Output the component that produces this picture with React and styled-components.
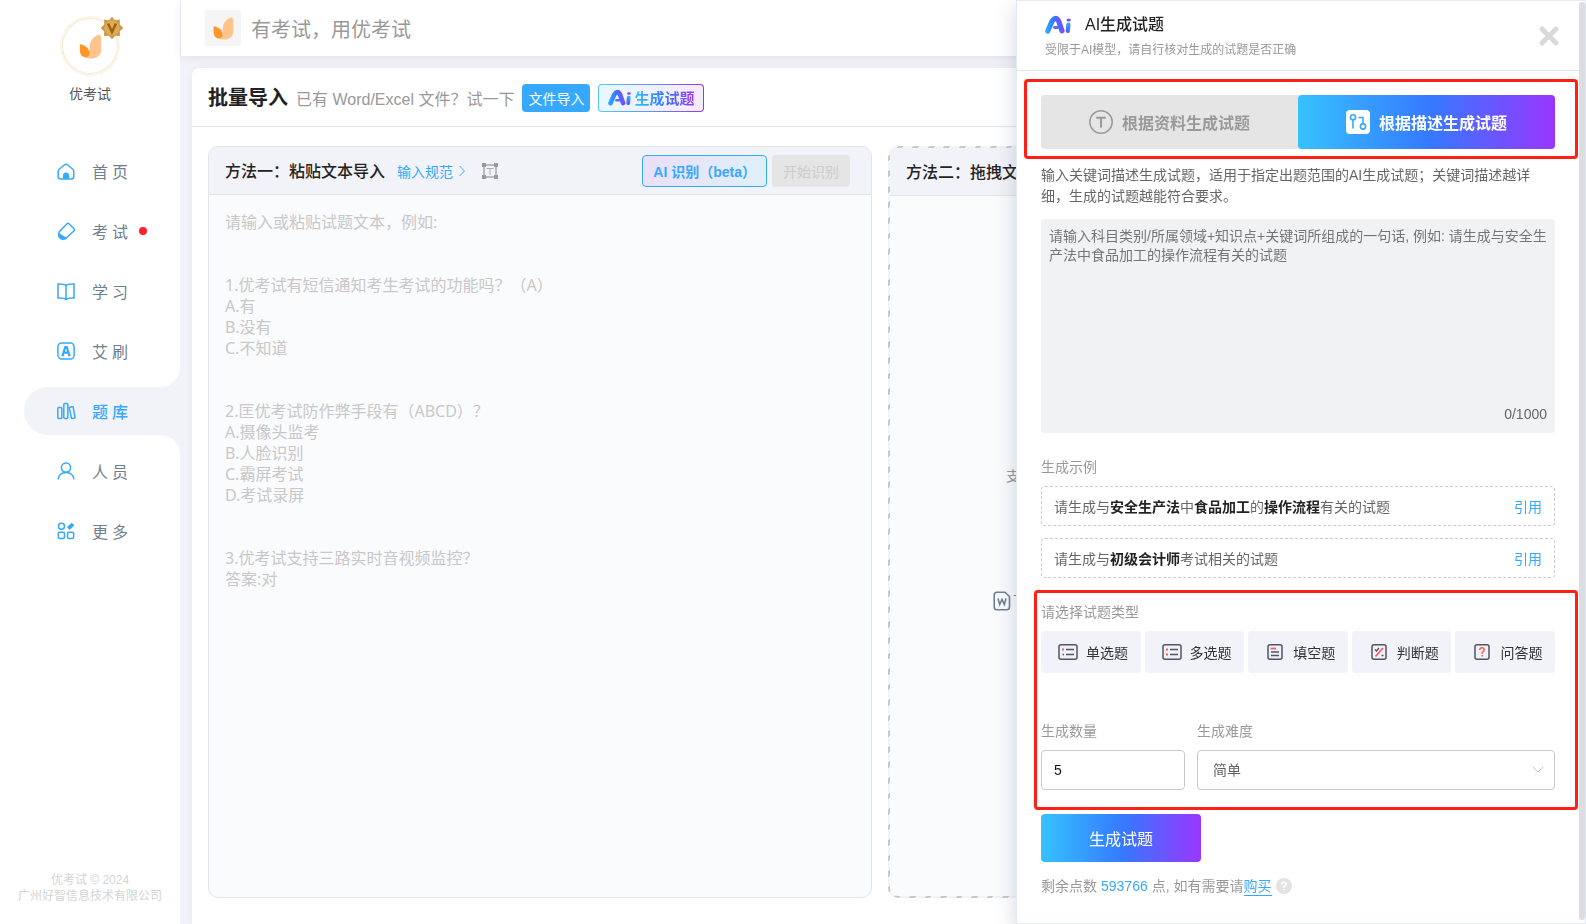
import React, { useState } from 'react'
import styled, { createGlobalStyle, css } from 'styled-components'

const BLUE = '#36a9ff'
const PAGE_BG = '#f2f3f8'
const GRADIENT = 'linear-gradient(90deg, #36c2ff 0%, #3678ff 52%, #9a36ff 100%)'
const SANS = "'Liberation Sans', Arial, 'Noto Sans CJK SC', sans-serif"
const HUMANIST = "'Noto Sans', 'Noto Sans CJK SC', sans-serif"

const GlobalStyle = createGlobalStyle`
  * {
    box-sizing: border-box;
  }
  body {
    margin: 0;
    font-family: ${SANS};
    font-size: 14px;
    color: #333;
    background: ${PAGE_BG};
  }
  button, input, select, textarea {
    margin: 0;
    font-family: inherit;
  }
  button {
    padding: 0;
    border: 0;
    background: none;
    cursor: pointer;
  }
  h1, h2, p {
    margin: 0;
  }
  a {
    text-decoration: none;
  }
  svg {
    display: block;
    flex: none;
  }
`

const Page = styled.div`
  display: flex;
  height: 100vh;
  overflow: hidden;
`

/* sidebar */

const Sidebar = styled.aside`
  flex: none;
  display: flex;
  flex-direction: column;
  width: 180px;
  background: #fff;
`

const Account = styled.div`
  display: flex;
  flex-direction: column;
  align-items: center;
  gap: 8px;
  height: 147px;
  padding-top: 16px;
  line-height: 20px;
  color: #555;
`

const Avatar = styled.div`
  position: relative;
  display: flex;
  align-items: center;
  justify-content: center;
  width: 60px;
  height: 60px;
  border: 2px solid #fbf5ea;
  border-radius: 50%;
  box-shadow: inset 0 0 0 1px #f5e6cc;
`

const VipBadge = styled.span`
  position: absolute;
  top: -2px;
  right: -6px;
`

const Menu = styled.nav`
  display: flex;
  flex-direction: column;
  gap: 12px;
`

const MenuItem = styled.a`
  position: relative;
  display: flex;
  align-items: center;
  gap: 15px;
  height: 48px;
  margin-left: 24px;
  padding-left: 33px;
  border-radius: 24px 0 0 24px;
  font-size: 16px;
  letter-spacing: 4px;
  color: #6f7f8f;

  ${props =>
    props.$active &&
    css`
      background: ${PAGE_BG};
      color: ${BLUE};
      font-weight: 500;

      &::before,
      &::after {
        content: '';
        position: absolute;
        right: 0;
        width: 20px;
        height: 20px;
      }
      &::before {
        bottom: 100%;
        border-bottom-right-radius: 20px;
        box-shadow: 6px 6px 0 6px ${PAGE_BG};
        clip-path: inset(0);
      }
      &::after {
        top: 100%;
        border-top-right-radius: 20px;
        box-shadow: 6px -6px 0 6px ${PAGE_BG};
        clip-path: inset(0);
      }
    `}
`

const Dot = styled.i`
  width: 8px;
  height: 8px;
  margin-left: -8px;
  border-radius: 50%;
  background: #ff1f2d;
`

const Copyright = styled.footer`
  margin-top: auto;
  padding-bottom: 20px;
  text-align: center;
  font-size: 12px;
  line-height: 16px;
  color: #d4d4d4;
`

/* main area */

const Main = styled.main`
  flex: 1;
  display: flex;
  flex-direction: column;
  min-width: 0;
`

const TopBar = styled.header`
  flex: none;
  display: flex;
  align-items: center;
  gap: 10px;
  height: 56px;
  padding-left: 24px;
  border-left: 1px solid #e9ebf2;
  background: #fff;
  box-shadow: 0 2px 8px rgba(40, 50, 90, 0.08);
  font-size: 20px;
  color: #999;
`

const LogoTile = styled.div`
  display: flex;
  align-items: center;
  justify-content: center;
  width: 36px;
  height: 36px;
  background: #f5f5f5;
`

const Card = styled.section`
  flex: 1;
  display: flex;
  flex-direction: column;
  margin: 12px 18px 0 12px;
  border-radius: 8px 8px 0 0;
  background: #fff;
  box-shadow: 0 0 8px rgba(40, 50, 90, 0.06);
`

const CardHeader = styled.div`
  display: flex;
  align-items: center;
  gap: 8px;
  height: 59px;
  padding: 1px 16px 0;
  border-bottom: 1px solid #e5e5e5;
`

const CardTitle = styled.h1`
  font-size: 20px;
  line-height: 28px;
  color: #222;
`

const Hint = styled.span`
  font-size: 16px;
  color: #999;
`

const ImportButton = styled.button`
  height: 28px;
  padding: 0 6px;
  border-radius: 4px;
  background: ${BLUE};
  font-size: 14px;
  color: #fff;
`

const AiButton = styled.button`
  display: flex;
  align-items: center;
  gap: 3px;
  height: 28px;
  padding: 0 9px;
  border: 1px solid transparent;
  border-radius: 4px;
  background: linear-gradient(90deg, #e9f8ff, #eef1ff 50%, #f6ebff) padding-box,
    linear-gradient(90deg, #54c8ff, #6a8dff 50%, #9a36d8) border-box;
  font-size: 15px;
  font-weight: 700;

  span {
    background: ${GRADIENT};
    background-clip: text;
    color: transparent;
  }
`

const Panels = styled.div`
  flex: 1;
  display: grid;
  grid-template-columns: 1fr 1fr;
  gap: 16px;
  min-height: 0;
  padding: 19px 16px 26px;
`

const Panel = styled.section`
  display: flex;
  flex-direction: column;
  min-width: 0;
  border: 1px solid #e2e4e8;
  border-radius: 10px;
  background: #fafbfd;
  overflow: hidden;
`

const DropPanel = styled(Panel)`
  border: 2px solid transparent;
  background: linear-gradient(#fafbfd, #fafbfd) padding-box,
    repeating-linear-gradient(-45deg, #c8c8c8 0 4px, #f3f3f3 4px 11px) border-box;
`

const PanelHeader = styled.div`
  flex: none;
  display: flex;
  align-items: center;
  height: 48px;
  padding: 0 21px 0 16px;
  border-bottom: 1px solid #e2e4e8;
  background: ${PAGE_BG};
`

const PanelTitle = styled.h2`
  padding-bottom: 2px;
  font-size: 16px;
  font-weight: 500;
  color: #222;
  white-space: nowrap;
`

const RuleLink = styled.a`
  display: flex;
  align-items: center;
  gap: 5px;
  margin: 0 16px 0 12px;
  color: ${BLUE};
`

const PanelActions = styled.div`
  display: flex;
  gap: 5px;
  margin-left: auto;
`

const BetaButton = styled.button`
  height: 32px;
  padding: 0 10px;
  border: 1px solid ${BLUE};
  border-radius: 4px;
  background: linear-gradient(90deg, #eadff8, #dff0f9);
  font-size: 14px;
  font-weight: 700;
  color: ${BLUE};
`

const StartButton = styled.button`
  height: 32px;
  padding: 0 11px;
  border-radius: 4px;
  background: #e5e5e5;
  font-size: 14px;
  color: #ccc;
`

const PasteArea = styled.textarea`
  flex: 1;
  width: 100%;
  padding: 17px 16px;
  border: 0;
  outline: 0;
  resize: none;
  background: transparent;
  font-family: ${HUMANIST};
  font-size: 16px;
  line-height: 21px;

  &::placeholder {
    color: #c8c8c8;
    opacity: 1;
  }
`

const DropBody = styled.div`
  flex: 1;
  display: flex;
  flex-direction: column;
  justify-content: center;
  gap: 105px;
  padding: 0 0 15px 103px;
  color: #999;
`

const DropTip = styled.p`
  padding-left: 13px;
  line-height: 20px;
`

const TemplateLink = styled.a`
  display: flex;
  align-items: center;
  gap: 2px;
  line-height: 20px;
  color: #708090;
`

/* drawer */

const Drawer = styled.aside`
  position: fixed;
  top: 0;
  right: 0;
  bottom: 0;
  width: 570px;
  border: 1px solid #e4e9ef;
  background: #fff;
  box-shadow: 0 8px 20px rgba(60, 80, 120, 0.24);
`

const ScrollThumb = styled.div`
  position: absolute;
  top: 1px;
  right: 0;
  bottom: 3px;
  width: 6px;
  border-radius: 3px;
  background: #dcdde0;
`

const DrawerHeader = styled.header`
  display: flex;
  align-items: center;
  justify-content: space-between;
  height: 70px;
  margin-right: 6px;
  padding: 0 19px 0 28px;
  border-bottom: 1px solid #e5e5e5;
`

const DrawerTitle = styled.h2`
  display: flex;
  align-items: center;
  gap: 14px;
  font-size: 16px;
  line-height: 24px;
  font-weight: 500;
  color: #222;
`

const DrawerSub = styled.p`
  margin-top: 4px;
  font-size: 12px;
  line-height: 18px;
  color: #999;
`

const DrawerBody = styled.div`
  padding: 24px 30px 0 24px;
`

const highlight = css`
  content: '';
  position: absolute;
  border: 3px solid #ff2015;
  border-radius: 4px;
  pointer-events: none;
`

const Tabs = styled.div`
  position: relative;
  display: grid;
  grid-template-columns: 1fr 1fr;
  border-radius: 4px;
  background: #e5e5e5;

  &::after {
    ${highlight}
    inset: -16px -23px -10px -17px;
  }
`

const Tab = styled.button`
  display: flex;
  align-items: center;
  justify-content: center;
  gap: 9px;
  height: 54px;
  border-radius: 4px;
  background: ${props => (props.$active ? GRADIENT : 'none')};
  font-size: 16px;
  font-weight: 700;
  color: ${props => (props.$active ? '#fff' : '#999')};
`

const Intro = styled.p`
  margin: 16px 0 12px;
  line-height: 21px;
  color: #666;
`

const PromptBox = styled.div`
  position: relative;
  height: 214px;
  border-radius: 4px;
  background: #f0f2f4;

  textarea {
    display: block;
    width: 100%;
    height: 100%;
    padding: 8px 6px 8px 8px;
    border: 0;
    outline: 0;
    resize: none;
    background: transparent;
    font-size: 14px;
    line-height: 19px;
  }
  textarea::placeholder {
    color: #757575;
    opacity: 1;
  }
  span {
    position: absolute;
    right: 8px;
    bottom: 9px;
    line-height: 20px;
    color: #666;
  }
`

const Label = styled.label`
  display: block;
  margin: 24px 0 9px;
  line-height: 20px;
  color: #999;
`

const Example = styled.div`
  display: flex;
  align-items: center;
  justify-content: space-between;
  height: 40px;
  padding: 0 12px;
  border: 1px dashed #ccc;
  border-radius: 4px;
  color: #666;

  & + & {
    margin-top: 12px;
  }
  b {
    color: #222;
  }
  button {
    font-size: 14px;
    color: ${BLUE};
  }
`

const Settings = styled.section`
  position: relative;
  margin-top: 24px;

  & > ${Label} {
    margin-top: 0;
  }
  &::after {
    ${highlight}
    inset: -12px -23px -20px -7px;
  }
`

const TypeList = styled.div`
  display: grid;
  grid-template-columns: repeat(5, 1fr);
  gap: 4px;
  margin-bottom: 48px;
`

const TypeButton = styled.button`
  display: flex;
  align-items: center;
  gap: 8px;
  height: 42px;
  padding-left: 17px;
  border-radius: 4px;
  background: ${PAGE_BG};
  font-size: 14px;
  color: #333;
`

const Fields = styled.div`
  display: grid;
  grid-template-columns: 144px 1fr;
  gap: 12px;

  ${Label} {
    margin-top: 0;
  }
`

const control = css`
  display: block;
  width: 100%;
  height: 40px;
  border: 1px solid #c8c9cc;
  border-radius: 4px;
  outline: 0;
  background: #fff;
  font-size: 14px;
`

const CountInput = styled.input`
  ${control}
  padding: 0 12px;
  color: #111;
`

const SelectWrap = styled.div`
  position: relative;

  select {
    ${control}
    padding: 0 15px;
    appearance: none;
    color: #606266;
  }
  svg {
    position: absolute;
    top: 16px;
    right: 11px;
    pointer-events: none;
  }
`

const SubmitButton = styled.button`
  display: block;
  width: 160px;
  height: 48px;
  margin-top: 24px;
  border-radius: 4px;
  background: ${GRADIENT};
  font-size: 16px;
  color: #fff;
`

const Balance = styled.p`
  display: flex;
  align-items: center;
  margin-top: 14px;
  line-height: 20px;
  color: #999;

  em {
    margin: 0 4px;
    font-style: normal;
    color: ${BLUE};
  }
  a {
    margin-right: 4px;
    border-bottom: 1px solid ${BLUE};
    line-height: 18px;
    color: ${BLUE};
  }
`

/* icons */

const Leaf = ({ size }) => (
  <svg width={size} height={size} viewBox='0 0 24 28'>
    <path d='M11.5 16C12 8 16 2.500 23 1.500C23.500 2.500 24 5 24 9V18C24 24 19 27.500 13 27.500C8 27.500 4.500 26 3 23C9 26 12.500 22 11.500 16Z' fill='#ffc48c' />
    <path d='M1 12C7 12.500 11.500 17 11.500 21.500C11.500 24.500 9.500 26 7 26C3 26 1 22.500 1 18Z' fill='#ff9628' />
  </svg>
)

const BadgeIcon = () => (
  <svg width='24' height='24' viewBox='0 0 24 24'>
    <path
      d='M12 .8L15 4.200L19.800 3.600L19.800 8.600L23.400 12L19.800 15.200L20 20L15.200 19.800L12 23.200L8.800 19.800L4 20L4.200 15.200L.6 12L4.200 8.600L4.200 3.600L9 4.200Z'
      fill='#cf9a45'
    />
    <circle cx='12' cy='12' r='7.500' fill='#dbac5c' />
    <path d='M8 7.500L12 16L16 7.500' fill='none' stroke='#a0640c' strokeWidth='2.600' />
  </svg>
)

const AiLogo = ({ width = 26 }) => (
  <svg width={width} height='19' viewBox='0 0 26 19'>
    <defs>
      <linearGradient id='ai-mark' gradientUnits='userSpaceOnUse' x1='1' y1='14' x2='20' y2='10'>
        <stop offset='0' stopColor='#2fa8ff' />
        <stop offset='.5' stopColor='#3678ff' />
        <stop offset='1' stopColor='#8f3cff' />
      </linearGradient>
      <linearGradient id='ai-stem' gradientUnits='userSpaceOnUse' x1='24' y1='3' x2='22' y2='18'>
        <stop offset='0' stopColor='#8f3cff' />
        <stop offset='.35' stopColor='#35a5ff' />
        <stop offset='1' stopColor='#4a5cff' />
      </linearGradient>
    </defs>
    <path d='M2.800 16L7 6.300Q10.600 .8 13.600 6L17 15.800' fill='none' stroke='url(#ai-mark)' strokeWidth='5.200' strokeLinecap='round' strokeLinejoin='round' />
    <path d='M9.500 12.500H13' stroke='#5a6cff' strokeWidth='2.800' strokeLinecap='round' />
    <path d='M23.400 9.500L22.800 16' stroke='url(#ai-stem)' strokeWidth='4.200' strokeLinecap='round' />
    <ellipse cx='23.700' cy='5' rx='2.200' ry='1.500' fill='#6a55ff' />
  </svg>
)

const menuShapes = {
  home: (
    <>
      <path d='M2 7.500L7.500 2.800Q9 1.700 10.500 2.800L16 7.500Q16.800 8.200 16.800 9.200V14.500Q16.800 17 14.300 17H3.700Q1.200 17 1.200 14.500V9.200Q1.200 8.200 2 7.500Z' />
      <path d='M6 17V13.500Q6 10.500 9 10.500T12 13.500V17Z' fill={BLUE} stroke='none' />
    </>
  ),
  exam: (
    <>
      <path d='M10 1.800Q11 .8 12 1.800L17 6.800Q18 7.800 17 8.800L9.500 16Q5 18.500 2.500 15.500Q.8 13 2.300 9.800Z' />
      <path d='M1.600 10.500Q4 13 9.500 15.500Q5 18.800 2.500 16Q.8 13.800 1.600 10.500Z' fill={BLUE} stroke='none' />
    </>
  ),
  study: <path d='M9 3.500Q7.500 1.800 1 2V16Q7.500 15.800 9 17.500Q10.500 15.800 17 16V2Q10.500 1.800 9 3.500ZM9 3.500V17' />,
  practice: (
    <>
      <rect x='.9' y='.9' width='16.200' height='16.200' rx='4' />
      <path d='M5.500 13.500L8.300 5H9.700L12.500 13.500M6.800 10.700H11.200' strokeWidth='2.200' />
      <path d='M4.500 13.600H7.200M10.800 13.600H13.500' strokeWidth='1.400' />
    </>
  ),
  bank: (
    <>
      <rect x='.8' y='5.500' width='4' height='11' rx='1' />
      <rect x='6.800' y='1.500' width='4' height='15' rx='1' />
      <path d='M12.700 5.200L15.300 4.700Q16 4.600 16.200 5.300L18 15.200Q18.100 15.900 17.400 16L15.200 16.400Q14.500 16.500 14.400 15.800L12.300 6Q12.100 5.300 12.700 5.200Z' />
    </>
  ),
  people: (
    <>
      <circle cx='9' cy='5.600' r='4.600' />
      <path d='M1 17.500Q2 10.500 9 10.500T17 17.500' />
    </>
  ),
  more: (
    <>
      <circle cx='4.500' cy='4.300' r='3' />
      <path d='M11.300 6.700L16 2' strokeWidth='3.800' />
      <rect x='1.300' y='10.300' width='6.200' height='6.200' rx='1.500' />
      <rect x='10.500' y='10.300' width='6.200' height='6.200' rx='1.500' />
    </>
  ),
}

const MenuIcon = ({ name }) => (
  <svg width='20' height='18' viewBox='0 0 20 18' fill='none' stroke={BLUE} strokeWidth='1.500'>
    {menuShapes[name]}
  </svg>
)

const typeShapes = {
  choice: (
    <>
      <rect x='1' y='1.700' width='18' height='14.600' rx='2' />
      <path d='M8 6.500H16M8 11.500H16M4.500 11.500H6' />
      <path d='M4 6.500H6' stroke='#ff5a5a' strokeWidth='2' />
    </>
  ),
  multi: (
    <>
      <rect x='1' y='1.700' width='18' height='14.600' rx='2' />
      <path d='M8 6.500H16M8 11.500H16' />
      <path d='M4 6.500H6M4 11.500H6' stroke='#ff5a5a' strokeWidth='2' />
    </>
  ),
  blank: (
    <>
      <rect x='3' y='1.700' width='14' height='14.600' rx='2' />
      <path d='M6 9H14M6 12.500H14' />
      <path d='M5.500 5.500H11' stroke='#ff5a5a' strokeWidth='1.800' />
    </>
  ),
  judge: (
    <>
      <rect x='3' y='1.700' width='14' height='14.600' rx='2' />
      <path d='M6 6.500L7.500 8L10 5M12.500 12.500H14.500' strokeWidth='1.400' />
      <path d='M6.500 13.500L14 5' stroke='#ff5a5a' strokeWidth='1.800' />
    </>
  ),
  qa: (
    <>
      <rect x='3' y='1.700' width='14' height='14.600' rx='2' />
      <path d='M7.800 7Q7.800 4.800 10 4.800T12.200 7Q12.200 8.300 10.300 9.200V10.800M10.300 12V13.500' stroke='#ff5a5a' />
    </>
  ),
}

const TypeIcon = ({ name }) => (
  <svg width='20' height='18' viewBox='0 0 20 18' fill='none' stroke='#4e5564' strokeWidth='1.500'>
    {typeShapes[name]}
  </svg>
)

const ScanIcon = () => (
  <svg width='16' height='16' viewBox='0 0 16 16' fill='none' stroke='#bbb'>
    <rect x='2' y='2' width='12' height='12' strokeWidth='2' />
    <path d='M4.500 5.500H11.500M8 5.500V12' stroke='#aaa' />
    <path d='M0 0h4v4H0zM12 0h4v4h-4zM0 12h4v4H0zM12 12h4v4h-4z' fill='#999' stroke='none' />
  </svg>
)

const TextIcon = () => (
  <svg width='24' height='24' viewBox='0 0 24 24' fill='none' stroke='#999'>
    <circle cx='12' cy='12' r='11.200' strokeWidth='1.500' />
    <path d='M7.200 7.800H16.800M12 7.800V17.500' strokeWidth='2' />
  </svg>
)

const DescribeIcon = () => (
  <svg width='24' height='24' viewBox='0 0 24 24' fill='none' stroke='#36a9ff' strokeWidth='1.600'>
    <rect width='24' height='24' rx='4' fill='#fff' stroke='none' />
    <circle cx='7' cy='7.300' r='2.600' />
    <path d='M7 10V18.500M12.500 7.500H17V13.500' />
    <circle cx='17' cy='16.500' r='2.600' />
  </svg>
)

const WordIcon = () => (
  <svg width='18' height='20' viewBox='0 0 18 20' fill='none' stroke='#708090' strokeWidth='1.600'>
    <path d='M4 1.200H12L16.500 5.500V16Q16.500 18.800 13.500 18.800H4Q1.200 18.800 1.200 16V4Q1.200 1.200 4 1.200Z' />
    <path d='M5 7.500L6.700 13.500L9 8.500L11.300 13.500L13 7.500' />
  </svg>
)

const HelpIcon = () => (
  <svg width='16' height='16' viewBox='0 0 16 16' fill='none'>
    <circle cx='8' cy='8' r='8' fill='#e3e3e3' />
    <path d='M5.800 6.500Q5.800 4.300 8 4.300T10.200 6.300Q10.200 7.500 8 8.500V9.700M8 11V12.500' stroke='#fff' strokeWidth='1.600' />
  </svg>
)

/* data */

const MENU = [
  { icon: 'home', text: '首页' },
  { icon: 'exam', text: '考试', dot: true },
  { icon: 'study', text: '学习' },
  { icon: 'practice', text: '艾刷' },
  { icon: 'bank', text: '题库', active: true },
  { icon: 'people', text: '人员' },
  { icon: 'more', text: '更多' },
]

const TYPES = [
  { icon: 'choice', text: '单选题' },
  { icon: 'multi', text: '多选题' },
  { icon: 'blank', text: '填空题' },
  { icon: 'judge', text: '判断题' },
  { icon: 'qa', text: '问答题' },
]

const PASTE_SAMPLE = `请输入或粘贴试题文本，例如:


1.优考试有短信通知考生考试的功能吗？（A）
A.有
B.没有
C.不知道


2.匡优考试防作弊手段有（ABCD）？
A.摄像头监考
B.人脸识别
C.霸屏考试
D.考试录屏


3.优考试支持三路实时音视频监控？
答案:对`

function SideNav() {
  return (
    <Sidebar>
      <Account>
        <Avatar>
          <Leaf size={26} />
          <VipBadge>
            <BadgeIcon />
          </VipBadge>
        </Avatar>
        优考试
      </Account>
      <Menu>
        {MENU.map(item => (
          <MenuItem key={item.icon} href='#' $active={item.active}>
            <MenuIcon name={item.icon} />
            {item.text}
            {item.dot ? <Dot /> : null}
          </MenuItem>
        ))}
      </Menu>
      <Copyright>
        优考试 © 2024
        <br />
        广州好智信息技术有限公司
      </Copyright>
    </Sidebar>
  )
}

function ImportCard() {
  return (
    <Card>
      <CardHeader>
        <CardTitle>批量导入</CardTitle>
        <Hint>已有 Word/Excel 文件？试一下</Hint>
        <ImportButton>文件导入</ImportButton>
        <AiButton>
          <AiLogo width={23} />
          <span>生成试题</span>
        </AiButton>
      </CardHeader>
      <Panels>
        <Panel>
          <PanelHeader>
            <PanelTitle>方法一：粘贴文本导入</PanelTitle>
            <RuleLink href='#'>
              输入规范
              <svg width='8' height='12' viewBox='0 0 8 12' fill='none' stroke={BLUE}>
                <path d='M1.500 1L6.500 6L1.500 11' />
              </svg>
            </RuleLink>
            <ScanIcon />
            <PanelActions>
              <BetaButton>AI 识别（beta）</BetaButton>
              <StartButton disabled>开始识别</StartButton>
            </PanelActions>
          </PanelHeader>
          <PasteArea aria-label='粘贴文本导入' placeholder={PASTE_SAMPLE} />
        </Panel>
        <DropPanel>
          <PanelHeader>
            <PanelTitle>方法二：拖拽文</PanelTitle>
          </PanelHeader>
          <DropBody>
            <DropTip>支</DropTip>
            <TemplateLink href='#'>
              <WordIcon />下
            </TemplateLink>
          </DropBody>
        </DropPanel>
      </Panels>
    </Card>
  )
}

function AiDrawer() {
  const [prompt, setPrompt] = useState('')
  const [tab, setTab] = useState('describe')

  return (
    <Drawer>
      <ScrollThumb />
      <DrawerHeader>
        <div>
          <DrawerTitle>
            <AiLogo />
            AI生成试题
          </DrawerTitle>
          <DrawerSub>受限于AI模型，请自行核对生成的试题是否正确</DrawerSub>
        </div>
        <button aria-label='关闭'>
          <svg width='22' height='22' viewBox='0 0 22 22' stroke='#d9d9d9' strokeWidth='5' strokeLinecap='round'>
            <path d='M4 4L18 18M18 4L4 18' />
          </svg>
        </button>
      </DrawerHeader>
      <DrawerBody>
        <Tabs>
          <Tab $active={tab === 'material'} onClick={() => setTab('material')}>
            <TextIcon />
            根据资料生成试题
          </Tab>
          <Tab $active={tab === 'describe'} onClick={() => setTab('describe')}>
            <DescribeIcon />
            根据描述生成试题
          </Tab>
        </Tabs>
        <Intro>输入关键词描述生成试题，适用于指定出题范围的AI生成试题；关键词描述越详细，生成的试题越能符合要求。</Intro>
        <PromptBox>
          <textarea
            aria-label='关键词描述'
            maxLength={1000}
            value={prompt}
            onChange={e => setPrompt(e.target.value)}
            placeholder='请输入科目类别/所属领域+知识点+关键词所组成的一句话, 例如: 请生成与安全生产法中食品加工的操作流程有关的试题'
          />
          <span>{prompt.length}/1000</span>
        </PromptBox>

        <Label as='p'>生成示例</Label>
        <Example>
          <span>
            请生成与<b>安全生产法</b>中<b>食品加工</b>的<b>操作流程</b>有关的试题
          </span>
          <button>引用</button>
        </Example>
        <Example>
          <span>
            请生成与<b>初级会计师</b>考试相关的试题
          </span>
          <button>引用</button>
        </Example>

        <Settings>
          <Label as='p'>请选择试题类型</Label>
          <TypeList>
            {TYPES.map(type => (
              <TypeButton key={type.icon}>
                <TypeIcon name={type.icon} />
                {type.text}
              </TypeButton>
            ))}
          </TypeList>
          <Fields>
            <div>
              <Label htmlFor='count'>生成数量</Label>
              <CountInput id='count' defaultValue='5' />
            </div>
            <div>
              <Label htmlFor='level'>生成难度</Label>
              <SelectWrap>
                <select id='level'>
                  <option>简单</option>
                </select>
                <svg width='12' height='8' viewBox='0 0 12 8' fill='none' stroke='#c0c4cc'>
                  <path d='M1 1L6 6L11 1' />
                </svg>
              </SelectWrap>
            </div>
          </Fields>
        </Settings>

        <SubmitButton>生成试题</SubmitButton>
        <Balance>
          剩余点数<em>593766</em>点, 如有需要请<a href='#'>购买</a>
          <HelpIcon />
        </Balance>
      </DrawerBody>
    </Drawer>
  )
}

export default function App() {
  return (
    <Page>
      <GlobalStyle />
      <SideNav />
      <Main>
        <TopBar>
          <LogoTile>
            <Leaf size={24} />
          </LogoTile>
          有考试，用优考试
        </TopBar>
        <ImportCard />
      </Main>
      <AiDrawer />
    </Page>
  )
}
